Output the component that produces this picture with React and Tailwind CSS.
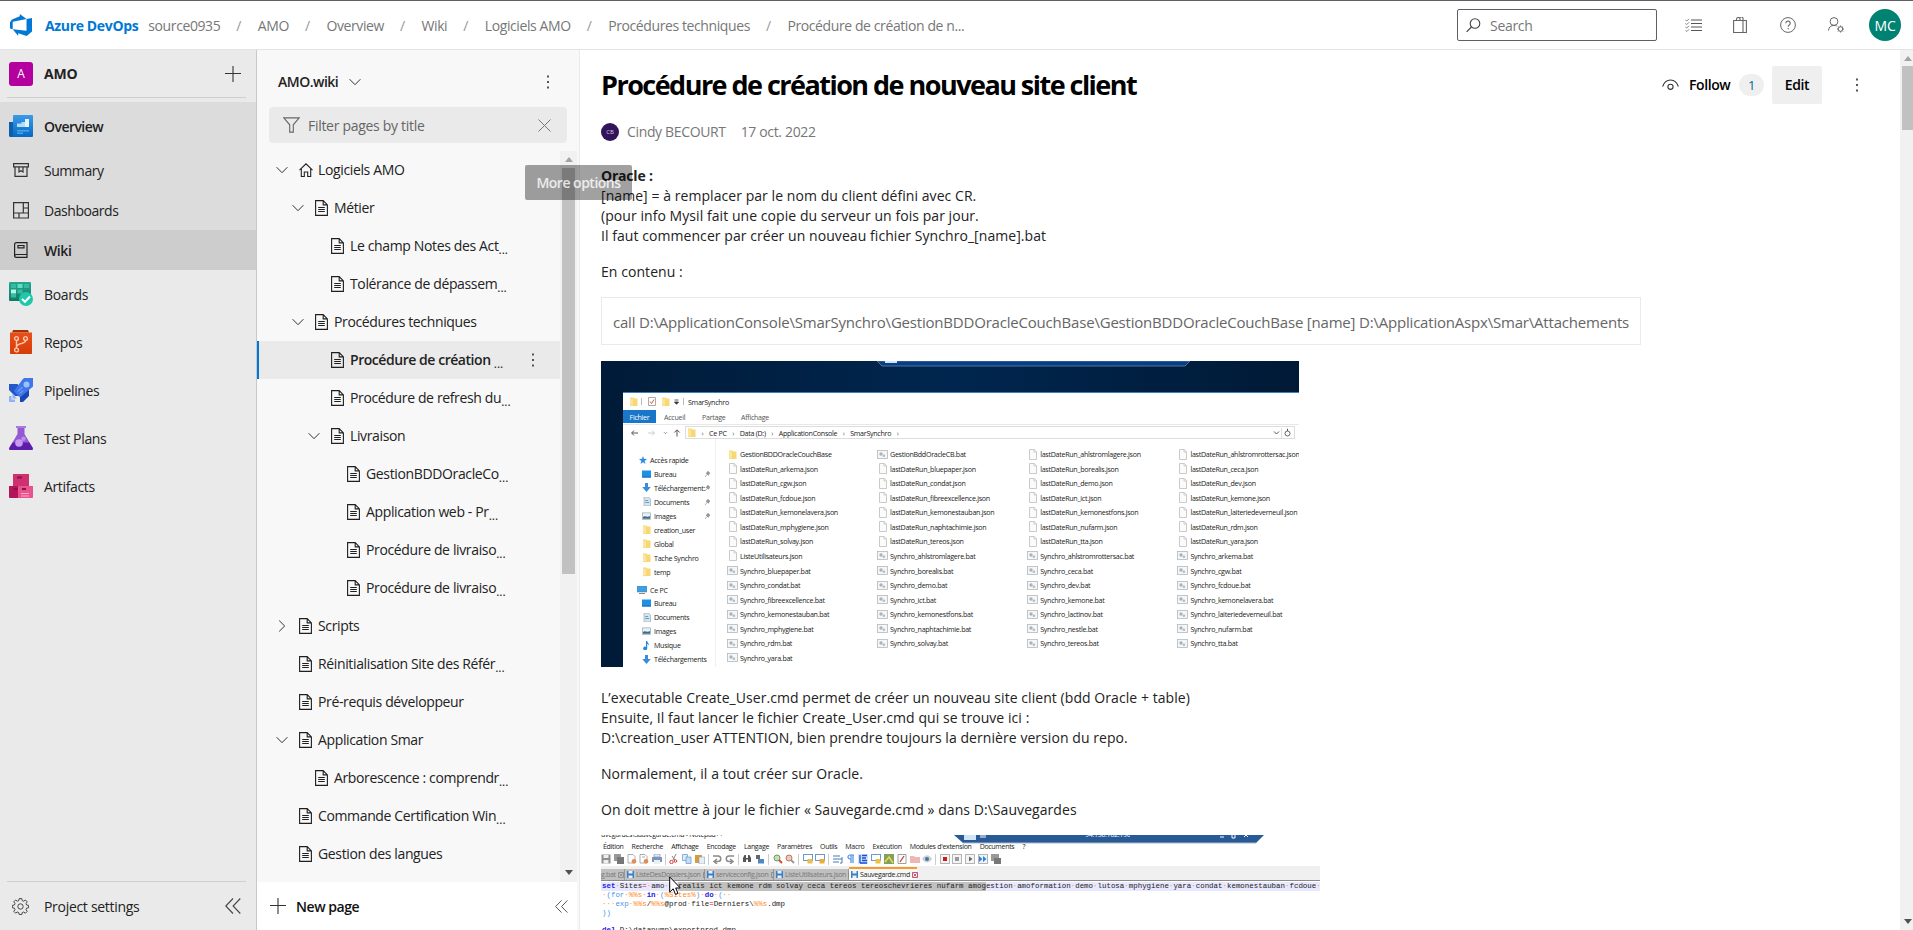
import React from "react";

/* ---------- icons ---------- */
const Svg = ({ w, h = w, vb, className = "", children, ...p }) => (
  <svg width={w} height={h} viewBox={vb || `0 0 ${w} ${h}`} fill="none" className={`shrink-0 ${className}`} {...p}>
    {children}
  </svg>
);
const Logo = () => (
  <Svg w={22} vb="0 0 24 24">
    <path fill="#0078d4" d="M0 8.877L2.247 5.91l8.405-3.416V.022l7.37 5.393L2.966 8.338v8.225L0 15.707zm24-4.45v14.651l-5.753 4.9-9.303-3.057v3.056l-5.978-7.416 15.057 1.798V5.415z" />
  </Svg>
);
const Plus = ({ color = "#333" }) => (
  <Svg w={16}><path d="M8 0v16M0 7.5h16" stroke={color} strokeWidth="1.1" /></Svg>
);
const ChevDown = () => (
  <Svg w={12}><path d="M.6 3.2L6 8.7l5.4-5.5" stroke="#333" strokeWidth="1" /></Svg>
);
const ChevRight = () => (
  <Svg w={12}><path d="M3.2.6L8.7 6l-5.5 5.4" stroke="#333" strokeWidth="1" /></Svg>
);
const Dots = () => (
  <Svg w={4} h={16}>
    <rect x="1" y="1.5" width="2" height="2" fill="#555" /><rect x="1" y="7" width="2" height="2" fill="#555" /><rect x="1" y="12.5" width="2" height="2" fill="#555" />
  </Svg>
);
const Page = () => (
  <Svg w={13} h={16}>
    <path d="M.6.6h7.6l4.2 4.3v10.5H.6zM8.2.6v4.3h4.2M3.2 7.5h6.6M3.2 9.5h6.6M3.2 11.5h6.6" stroke="#1f1f1f" strokeWidth="1.1" />
  </Svg>
);
const Home = () => (
  <Svg w={14} h={14}><path d="M.5 7.2L7 .8l6.500 6.400M2.300 5.700v7.800h3V9h3.400v4.500h3V5.700" stroke="#222" strokeWidth="1.100" /></Svg>
);
const DoubleLeft = ({ s = 16 }) => (
  <Svg w={s} vb="0 0 16 16"><path d="M8 .5L.8 8 8 15.500M15.300.5L8.100 8l7.200 7.500" stroke="#444" strokeWidth="1.100" /></Svg>
);
const Folder = ({ s = 9 }) => (
  <Svg w={s} vb="0 0 9 9"><path d="M1 .5h3.500l.8 1H8.500V9H1z" fill="#f8d775" /><path d="M1 1.500h3v7H1z" fill="#fbe49b" /></Svg>
);
const FileIcon = () => (
  <Svg w={8} h={11}><path d="M.5.5h4.800L7.500 2.800v7.700h-7z" fill="#fbfbfb" stroke="#bdbdbd" strokeWidth=".8" /><path d="M5 .5v2.500h2.500" stroke="#bdbdbd" strokeWidth=".7" /></Svg>
);
const BatIcon = () => (
  <Svg w={11} h={9}><rect x=".5" y=".5" width="10" height="8" fill="#f4f6f7" stroke="#b4b9bd" strokeWidth=".8" /><circle cx="4" cy="4" r="1.700" fill="#a9b3ba" /><circle cx="6.900" cy="5.800" r="1.300" fill="#b3bcc2" /></Svg>
);

const OverviewIcon = () => (
  <Svg w={24}>
    <path d="M0 8h5v15H1.500A1.500 1.500 0 010 21.500z" fill="#0f5ea8" />
    <rect x="4" y="1" width="20" height="22" rx="1" fill="url(#ov)" />
    <path d="M8 13V9.500h4.500V8H16V5h4v8z" fill="#b5dcf8" /><path d="M16 5h4v8h-4z" fill="#e4f3fd" />
    <path d="M8 16h12v1.500H8zM8 18.500h6V20H8z" fill="#4da3e8" />
    <defs><linearGradient id="ov" x1="0" y1="0" x2="0" y2="1"><stop stopColor="#3c9be8" /><stop offset="1" stopColor="#0669c4" /></linearGradient></defs>
  </Svg>
);
const SummaryIcon = () => (
  <Svg w={16}><path d="M.6 1.600h14.800v3.300H.6zM2 5v9.400h12V5M6 5v5l2-1.300L10 10V5" stroke="#333" strokeWidth="1.200" /></Svg>
);
const DashIcon = () => (
  <Svg w={16} h={17}><path d="M.6.6h14.800v15.400H.6zM.6 11H15.400M10.300.6V11M10.300 6h5.100M6 11v5" stroke="#333" strokeWidth="1.200" /></Svg>
);
const WikiIcon = () => (
  <Svg w={14} h={16}><path d="M13 12.500V.6H2.500A1.900 1.900 0 00.6 2.500v11a1.900 1.900 0 001.900 1.900H13v-2.900H2.500A1.900 1.900 0 00.8 13.500M4 3.500h6v2.300H4z" stroke="#222" strokeWidth="1.200" /></Svg>
);
const BoardsIcon = () => (
  <Svg w={24}>
    <rect width="22" height="19" rx="1" fill="url(#bo)" />
    <path d="M2 2h5v4H2z M15 2h5v4h-5z M2 12h5v3.500H2z M8.500 7.500h5v4h-5z" fill="#35bba0" /><path d="M8.500 2h5v4h-5z" fill="#5fe0c6" /><path d="M2 7.500h5v4H2z" fill="#a9fbe8" />
    <circle cx="17" cy="17" r="7" fill="#1fc8ad" /><path d="M13 17l3 2.800 5-5.300" stroke="#fff" strokeWidth="2" />
    <defs><linearGradient id="bo" x1="0" y1="0" x2="0" y2="1"><stop stopColor="#28a88e" /><stop offset="1" stopColor="#0e7a66" /></linearGradient></defs>
  </Svg>
);
const ReposIcon = () => (
  <Svg w={24}>
    <path d="M4 0h15l1 2.500H3z" fill="#a53008" /><path d="M1 2.500h22V23.200a.8.8 0 01-.8.8H1.800a.8.800 0 01-.8-.8z" fill="url(#re)" />
    <g stroke="#fdc7ae" strokeWidth="1.400"><circle cx="7.500" cy="8.500" r="1.900" /><circle cx="16.500" cy="8.500" r="1.900" /><circle cx="7.500" cy="20" r="1.900" /><path d="M7.500 10.500V18M16.500 10.500c0 4-8.500 2-9 6.500" /></g>
    <defs><linearGradient id="re" x1="0" y1="0" x2="0" y2="1"><stop stopColor="#e8501a" /><stop offset="1" stopColor="#d63c07" /></linearGradient></defs>
  </Svg>
);
const PipesIcon = () => (
  <Svg w={24}>
    <path d="M0 6h8.500L16 14v7l-5 3V18H6L0 12z" fill="#2159c9" /><path d="M14 12l6-2v8l-6 6h-3v-7z" fill="#1747b5" />
    <path d="M13.500 1.500L15 0h9v8.500L11 19.500 5 13z" fill="#3f76ea" /><circle cx="17.500" cy="6.500" r="3" fill="#9cc0fa" />
    <path d="M9 13.500l4.500-4.500M11 15.500l3-3" stroke="#9cc0fa" strokeWidth=".9" /><path d="M0 18h2.500v3.500H6V24H0zM3.500 16l4.500 4.500H3.500z" fill="#8db2f7" />
  </Svg>
);
const TestIcon = () => (
  <Svg w={24}>
    <path d="M7 0h10v2h-1.500v6L23.500 21.500C24.300 23 23.800 24 22.500 24h-21C.2 24-.3 23 .5 21.500L8.500 8V2H7z" fill="#9259d1" /><path d="M3.700 16.500h16.600l3.200 5c.8 1.500.3 2.500-1 2.500h-21C.2 24-.3 23 .5 21.500z" fill="#5c1ea8" />
    <path d="M7 0h10v2H7z" fill="#a979dd" /><circle cx="10" cy="17" r="3.800" fill="#c79cf0" /><circle cx="14.500" cy="12.800" r="2.300" fill="#bc8fe8" />
  </Svg>
);
const ArtIcon = () => (
  <Svg w={24}>
    <path d="M4 0h16v12H4z" fill="#cf3070" /><path d="M8 2.500h5v2H8z" fill="#8f1045" /><path d="M0 12h12v12H.8a.8.800 0 01-.8-.8z" fill="#b3175b" /><path d="M9 12h15v11.200a.8.800 0 01-.8.800H9z" fill="#e8528d" /><path d="M4.500 14h4v2h-4zM13 14h4v2h-4z" fill="#8f1045" /><path d="M12 19h8v1h-8zM12 21.500h8v1h-8z" fill="#f9a8ca" />
  </Svg>
);
const Gear = () => (
  <Svg w={17}>
    <circle cx="8.500" cy="8.500" r="2.700" stroke="#444" />
    <path d="M7.200.6h2.600l.4 2 1.500.6L13.400 2l1.800 1.800-1.200 1.700.6 1.500 2 .4v2.400l-2 .4-.6 1.500 1.200 1.700-1.800 1.800-1.700-1.200-1.500.6-.4 2H7.200l-.4-2-1.500-.6-1.700 1.200L1.800 13.400 3 11.700l-.6-1.500-2-.4V7.400l2-.4L3 5.500 1.800 3.800 3.600 2l1.700 1.200 1.500-.6z" stroke="#444" />
  </Svg>
);
const Eye = () => (
  <Svg w={17} h={12}><path d="M.6 7.500C2 3.500 5 1 8.500 1s6.500 2.500 7.900 6.500" stroke="#333" strokeWidth="1.100" /><circle cx="8.500" cy="7.800" r="2.600" stroke="#333" strokeWidth="1.100" /></Svg>
);

/* ---------- header ---------- */
const crumbs = ["AMO", "Overview", "Wiki", "Logiciels AMO", "Procédures techniques", "Procédure de création de n..."];
function Header() {
  return (
    <header className="flex h-[50px] shrink-0 items-center border-t border-b border-t-[#605f66] border-b-[#e4e4e4] bg-white pl-[10px]">
      <Logo />
      <span className="ml-[13px] text-[14px] font-bold tracking-[-0.35px] text-[#0078d4]">Azure DevOps</span>
      <span className="ml-[10px] pt-[1px] text-[14px] tracking-[-0.4px] text-[#777]">source0935</span>
      {crumbs.map((c) => (
        <React.Fragment key={c}>
          <span className="ml-[16px] w-[6px] pt-[1px] text-[14px] text-[#999]">/</span>
          <span className="ml-[15.500px] pt-[1px] text-[14px] tracking-[-0.4px] text-[#777]">{c}</span>
        </React.Fragment>
      ))}
      <div className="flex-1" />
      <div className="flex h-8 w-[200px] shrink-0 items-center rounded-[2px] border border-[#605f66] pl-[8px]">
        <Svg w={15}><circle cx="9" cy="5.500" r="4.800" stroke="#444" strokeWidth="1.100" /><path d="M5.500 9L.6 13.900" stroke="#444" strokeWidth="1.200" /></Svg>
        <span className="ml-[9px] pt-[1px] text-[14px] tracking-[-0.3px] text-[#777]">Search</span>
      </div>
      <div className="ml-[28px] flex w-[228px] shrink-0 items-center">
        <Svg w={17} h={14}>
          <path d="M6 2h11M6 5.500h11M6 9h11M6 12.500h11" stroke="#555" />
          <path d="M.5 2l1.300 1L4 .8M.5 5.500l1.300 1L4 4.300M.5 9l1.300 1L4 7.800M.5 12.500l1.300 1L4 11.300" stroke="#666" strokeWidth=".8" />
        </Svg>
        <Svg w={14} h={16} className="ml-[31px]"><path d="M.6 3.500h12.800v12H.6zM10 3.500v12M3.500 3.500V2.300a1.800 1.800 0 013.600 0v1.200M6.500 1.200A1.800 1.800 0 0110 2.300v1.200" stroke="#666" strokeWidth="1.100" /></Svg>
        <Svg w={16} className="ml-[33px]"><circle cx="8" cy="8" r="7.400" stroke="#666" /><path d="M5.800 6.200a2.200 2.200 0 114 1.300c-.8.700-1.600 1-1.600 2.300M8.200 11v1.300" stroke="#666" strokeWidth="1.100" /></Svg>
        <Svg w={17} h={16} className="ml-[32px]"><circle cx="6" cy="4.500" r="3.900" stroke="#666" /><path d="M.5 13.500C.8 10 3 8.400 6 8.400c1 0 2 .2 2.700.7" stroke="#666" /><circle cx="12.500" cy="12" r="2.300" stroke="#666" /><path d="M12.500 8.500v1.200M12.500 14.300v1.200M9 12h1.200M14.800 12H16M10 9.500l.9.900M14.100 13.600l.9.900M15 9.500l-.9.900M10.900 13.600l-.9.900" stroke="#666" /></Svg>
        <div className="ml-[24px] flex h-8 w-8 shrink-0 items-center justify-center rounded-full bg-[#008272] text-[14px] tracking-[-0.3px] text-white">MC</div>
      </div>
    </header>
  );
}

/* ---------- project navigation ---------- */
function NavItem({ icon, label, h = "h-12", extra = "tracking-[-0.35px]" }) {
  return (
    <div className={`flex items-center ${h} ${extra}`}>
      <div className="ml-[9px] flex w-[24px] items-center justify-center">{icon}</div>
      <span className="ml-[11px] text-[14px]">{label}</span>
    </div>
  );
}
function Sidebar() {
  return (
    <nav className="flex w-[257px] shrink-0 flex-col border-r border-[#c8c8c8] bg-[#eaeaea] text-[#222]">
      <div className="mr-[10px] ml-[7px] flex h-[48px] items-center border-b border-[#cfcfcf] pl-[2px]">
        <div className="flex h-[24px] w-[24px] items-center justify-center rounded-[3px] bg-[#b4009e] text-[12px] text-white">A</div>
        <span className="ml-[11px] text-[14px] font-bold tracking-[-0.2px]">AMO</span>
        <div className="mr-[5px] ml-auto"><Plus /></div>
      </div>
      <div className="mt-[4px] bg-[#dcdcdc]">
        <NavItem icon={<OverviewIcon />} label="Overview" extra="font-semibold tracking-[-0.55px]" />
        <NavItem icon={<SummaryIcon />} label="Summary" h="h-10" extra="tracking-[-0.45px]" />
        <NavItem icon={<DashIcon />} label="Dashboards" h="h-10" extra="tracking-[-0.45px]" />
        <NavItem icon={<WikiIcon />} label="Wiki" h="h-10" extra="bg-[#cdcdcd] font-semibold tracking-[-0.4px]" />
      </div>
      <NavItem icon={<BoardsIcon />} label="Boards" />
      <NavItem icon={<ReposIcon />} label="Repos" />
      <NavItem icon={<PipesIcon />} label="Pipelines" />
      <NavItem icon={<TestIcon />} label="Test Plans" />
      <NavItem icon={<ArtIcon />} label="Artifacts" />
      <div className="mt-auto mr-[10px] ml-[7px] flex h-[49px] items-center border-t border-[#cfcfcf] pl-[5px]">
        <Gear />
        <span className="ml-[15px] text-[14px] tracking-[-0.3px]">Project settings</span>
        <div className="mr-[5px] ml-auto"><DoubleLeft /></div>
      </div>
    </nav>
  );
}

/* ---------- wiki tree ---------- */
const tree = [
  [0, "Logiciels AMO", "home"], [1, "Métier", "open"], [2, "Le champ Notes des Act", "", 1], [2, "Tolérance de dépassem", "", 1],
  [1, "Procédures techniques", "open"], [2, "Procédure de création ", "sel", 1], [2, "Procédure de refresh du", "", 1], [2, "Livraison", "open"],
  [3, "GestionBDDOracleCo", "", 1], [3, "Application web - Pr", "", 1], [3, "Procédure de livraiso", "", 1], [3, "Procédure de livraiso", "", 1],
  [0, "Scripts", "closed"], [0, "Réinitialisation Site des Référ", "", 1], [0, "Pré-requis développeur", ""], [0, "Application Smar", "open"],
  [1, "Arborescence : comprendr", "", 1], [0, "Commande Certification Win", "", 1], [0, "Gestion des langues", ""],
];
const indent = ["pl-[19px]", "pl-[35px]", "pl-[51px]", "pl-[67px]"];
function TreeRow({ level, label, kind, more }) {
  const sel = kind === "sel";
  return (
    <div className={`relative flex h-[38px] items-center ${indent[level]} ${sel ? "bg-[#eaeaea]" : ""}`}>
      {sel && <span className="absolute inset-y-0 left-0 w-[2px] bg-[#0078d4]" />}
      <span className="w-3">{(kind === "open" || kind === "home") ? <ChevDown /> : kind === "closed" ? <ChevRight /> : null}</span>
      <span className="ml-[11px] w-[13px]">{kind === "home" ? <Home /> : <Page />}</span>
      <span className={`ml-[6px] pb-[1px] text-[14px] whitespace-pre text-[#222] ${sel ? "font-semibold tracking-[-0.45px]" : "tracking-[-0.36px]"}`}>
        {label}
        {more ? <span className="relative top-[3px] text-[12px] font-normal tracking-normal">...</span> : null}
      </span>
      {sel && <span className="mr-[25px] ml-auto"><Dots /></span>}
    </div>
  );
}
const Tri = ({ up, color }) => <Svg w={8} h={5}><path d={up ? "M0 5l4-5 4 5z" : "M0 0l4 5 4-5z"} fill={color} /></Svg>;

function WikiPane() {
  return (
    <aside className="relative flex w-[323px] shrink-0 flex-col border-r border-[#eaeaea] bg-[#f8f8f8]">
      <div className="flex h-[57px] items-center pt-[7px] pl-[21px]">
        <span className="pb-[1px] text-[14px] font-semibold tracking-[-0.5px] text-[#222]">AMO.wiki</span>
        <span className="ml-[11px]"><ChevDown /></span>
        <span className="mr-[29px] ml-auto"><Dots /></span>
      </div>
      <div className="mx-[12px] flex h-[36px] w-[298px] items-center rounded bg-[#eaeaea] pr-[16px] pl-[14px]">
        <Svg w={17} h={16}><path d="M.8.900h15.400L10.300 7.800v7.300H6.700V7.800z" stroke="#666" strokeWidth="1.100" /></Svg>
        <span className="ml-[8px] text-[14px] tracking-[-0.3px] text-[#666]">Filter pages by title</span>
        <Svg w={13} className="ml-auto"><path d="M.5.5l12 12M12.500.5l-12 12" stroke="#777" /></Svg>
      </div>
      <div className="mt-2 flex h-[731px] overflow-hidden">
        <div className="w-[303px] shrink-0">
          {tree.map((t, i) => <TreeRow key={i} level={t[0]} label={t[1]} kind={t[2]} more={t[3]} />)}
        </div>
        <div className="flex w-[17px] flex-col items-center bg-[#f1f1f1] py-[6px]">
          <Tri up color="#a3a3a3" />
          <div className="mt-[6px] h-[406px] w-[13px] bg-[#c1c1c1]" />
          <div className="mt-auto mb-[1px]"><Tri color="#505050" /></div>
        </div>
      </div>
      <div className="mr-[2px] flex flex-1 items-center bg-white pl-[13px]">
        <Plus />
        <span className="ml-[10px] text-[14px] font-semibold tracking-[-0.45px] text-[#111]">New page</span>
        <span className="mr-[9px] ml-auto"><DoubleLeft s={13} /></span>
      </div>
      <div className="absolute top-[115px] left-[268px] z-20 flex h-[35px] w-[107px] items-center justify-center rounded-[2px] bg-black/[0.37] text-[14px] font-semibold tracking-[-0.5px] text-white/80">More options</div>
    </aside>
  );
}

/* ---------- file explorer capture ---------- */
const files = [
  ["GestionBDDOracleCouchBase", "lastDateRun_arkema.json", "lastDateRun_cgw.json", "lastDateRun_fcdoue.json", "lastDateRun_kemonelavera.json", "lastDateRun_mphygiene.json", "lastDateRun_solvay.json", "ListeUtilisateurs.json", "Synchro_bluepaper.bat", "Synchro_condat.bat", "Synchro_fibreexcellence.bat", "Synchro_kemonestauban.bat", "Synchro_mphygiene.bat", "Synchro_rdm.bat", "Synchro_yara.bat"],
  ["GestionBddOracleCB.bat", "lastDateRun_bluepaper.json", "lastDateRun_condat.json", "lastDateRun_fibreexcellence.json", "lastDateRun_kemonestauban.json", "lastDateRun_naphtachimie.json", "lastDateRun_tereos.json", "Synchro_ahlstromlagere.bat", "Synchro_borealis.bat", "Synchro_demo.bat", "Synchro_ict.bat", "Synchro_kemonestfons.bat", "Synchro_naphtachimie.bat", "Synchro_solvay.bat"],
  ["lastDateRun_ahlstromlagere.json", "lastDateRun_borealis.json", "lastDateRun_demo.json", "lastDateRun_ict.json", "lastDateRun_kemonestfons.json", "lastDateRun_nufarm.json", "lastDateRun_tta.json", "Synchro_ahlstromrottersac.bat", "Synchro_ceca.bat", "Synchro_dev.bat", "Synchro_kemone.bat", "Synchro_lactinov.bat", "Synchro_nestle.bat", "Synchro_tereos.bat"],
  ["lastDateRun_ahlstromrottersac.json", "lastDateRun_ceca.json", "lastDateRun_dev.json", "lastDateRun_kemone.json", "lastDateRun_laiteriedeverneuil.json", "lastDateRun_rdm.json", "lastDateRun_yara.json", "Synchro_arkema.bat", "Synchro_cgw.bat", "Synchro_fcdoue.bat", "Synchro_kemonelavera.bat", "Synchro_laiteriedeverneuil.bat", "Synchro_nufarm.bat", "Synchro_tta.bat"],
];
const glyphs = {
  desk: <Svg w={9} h={8}><rect y=".5" width="9" height="7" fill="#1e90e6" /><path d="M0 6.500h9v1H0z" fill="#1668b8" /></Svg>,
  down: <Svg w={9}><path d="M3 0h3v4h2.800L4.500 9 .2 4H3z" fill="#3a8ddb" /></Svg>,
  doc: <Svg w={8} h={9}><path d="M1 0h4.500L7.500 2v7H1z" fill="#d8e4ec" stroke="#8da2b0" strokeWidth=".6" /><path d="M2.200 3.500h3M2.200 5.500h4" stroke="#3f8fc8" strokeWidth=".8" /></Svg>,
  img: <Svg w={9} h={8}><rect x=".4" y=".9" width="8.200" height="6.400" fill="#e8f2f8" stroke="#98a4ac" strokeWidth=".7" /><path d="M1 5c2-2 4 1 7-1v2.700H1z" fill="#3a6d86" /></Svg>,
  note: <Svg w={7} h={9}><path d="M3 0l1.200 0c0 2 2.300 2.200 1.600 4.500C5.500 3.500 4.800 3 4.200 3v4.200A2 1.700 0 113 5.800z" fill="#1f8ae0" /></Svg>,
  fold: <Folder />,
};
const quick = [["Bureau", "desk", 1], ["Téléchargement:", "down", 1], ["Documents", "doc", 1], ["Images", "img", 1], ["creation_user", "fold"], ["Global", "fold"], ["Tache Synchro", "fold"], ["temp", "fold"]];
const pc = [["Bureau", "desk"], ["Documents", "doc"], ["Images", "img"], ["Musique", "note"], ["Téléchargements", "down"]];
const SideRow = ({ r }) => (
  <div className="flex h-[13.950px] items-center">
    <span className="flex w-[28px] shrink-0 justify-end"><span className="flex w-[9px] justify-center">{glyphs[r[1]]}</span></span>
    <span className="ml-[3px] w-[51px] shrink-0 whitespace-nowrap">{r[0]}</span>
    {r[2] && <Svg w={5} h={6}><path d="M0 6l2-2.500M1 2l2.500 2.500M3 .3L5 2.300 3.300 4 1.500 2z" stroke="#888" strokeWidth=".7" fill="#999" /></Svg>}
  </div>
);
function Explorer() {
  return (
    <div className="mt-[16px] flex h-[306px] w-[698px] flex-col overflow-hidden bg-linear-to-r from-[#001b38] via-[#00264f] to-[#001a36] pl-[22px] text-[7.100px] tracking-[-0.28px] text-[#222]">
      <div className="h-[31px] shrink-0 pl-[254px]">
        <Svg w={314} h={6}><path d="M0 0h313l-5 5H5z" fill="#063f87" stroke="#6884a3" strokeWidth=".8" /><rect x="8" width="12" height="2" fill="#cfe5f7" /></Svg>
      </div>
      <div className="flex flex-1 flex-col overflow-hidden border-t border-[#3d7fbf] bg-white">
        <div className="flex h-[17px] shrink-0 items-center pl-[6px]">
          <Folder /><span className="mx-[3px] h-[7px] w-px bg-[#bbb]" />
          <Svg w={8} h={9} className="ml-[3px]"><path d="M.5.5h7v8h-7z" fill="#fff" stroke="#888" strokeWidth=".7" /><path d="M2 4.500l1.500 2L6 2.500" stroke="#d45d2a" /></Svg>
          <span className="ml-[5px]"><Folder /></span>
          <Svg w={5} h={6} className="ml-[4px]"><path d="M.5 1h4M.5 3h4L2.500 5.300z" stroke="#333" strokeWidth=".8" fill="#333" /></Svg>
          <span className="mx-[4px] h-[7px] w-px bg-[#bbb]" /><span>SmarSynchro</span>
        </div>
        <div className="flex h-[13px] shrink-0 items-center">
          <span className="flex h-full w-[33px] items-center justify-center bg-[#1976c8] text-white">Fichier</span>
          <span className="ml-[8px] w-[38px] text-[#555]">Accueil</span><span className="w-[39px] text-[#555]">Partage</span><span className="text-[#555]">Affichage</span>
        </div>
        <div className="mt-[1px] h-px shrink-0 bg-[#e8e8e8]" />
        <div className="mt-[1px] flex h-[13px] shrink-0 items-center pl-[8px]">
          <Svg w={52} h={8}><path d="M7 4H.8M3 1.500L.6 4 3 6.500" stroke="#555" /><path d="M17 4h6.500M21 1.500L23.500 4 21 6.500" stroke="#ccc" /><path d="M33 3.200l1.500 1.500L36 3.200" stroke="#777" strokeWidth=".8" /><path d="M46 7.500V1M43.300 3.500L46 .8l2.700 2.700" stroke="#555" /></Svg>
          <div className="ml-[2px] flex h-full w-[610px] items-center border border-[#ddd] pl-[1px]">
            <Folder />
            {["Ce PC", "Data (D:)", "ApplicationConsole", "SmarSynchro", ""].map((s, i) => (
              <React.Fragment key={i}><span className="w-[13px] text-center text-[#555]">›</span><span>{s}</span></React.Fragment>
            ))}
            <Svg w={20} h={10} className="mr-[1px] ml-auto"><path d="M1 3.500L3.500 6 6 3.500" stroke="#555" /><path d="M8.500 0v10" stroke="#ddd" /><circle cx="14.500" cy="5.500" r="2.500" stroke="#555" strokeWidth=".9" /><path d="M14.500 3V.8" stroke="#555" /></Svg>
          </div>
        </div>
        <div className="flex flex-1">
          <div className="w-[93px] shrink-0 border-r border-[#f0f0f0] pt-[13px]">
            <div className="mt-px flex h-[14px] items-center pl-[16px]">
              <Svg w={8} h={8}><path d="M4 0l1 2.800 3 .2-2.300 1.900L6.500 8 4 6.300 1.500 8l.8-3.100L0 3l3-.2z" fill="#2f8ee0" /></Svg><span className="ml-[3px]">Accès rapide</span>
            </div>
            {quick.map((r) => <SideRow key={r[0]} r={r} />)}
            <div className="mt-[4px] flex h-[14px] items-center pl-[14px]">
              <Svg w={10} h={8}><rect width="10" height="6" fill="#3aa0e8" stroke="#777" strokeWidth=".5" /><path d="M2 7.500h6" stroke="#888" /></Svg><span className="ml-[3px]">Ce PC</span>
            </div>
            {pc.map((r) => <SideRow key={r[0]} r={r} />)}
          </div>
          {files.map((col, c) => (
            <div key={c} className={`shrink-0 pt-[8px] ${c === 0 ? "ml-[11px] w-[150px]" : "w-[150.200px]"}`}>
              {col.map((f) => (
                <div key={f} className="flex h-[14.540px] items-center">
                  <span className="flex w-[11px] justify-center">{!f.includes(".") ? <Folder /> : f.endsWith("json") ? <FileIcon /> : <BatIcon />}</span>
                  <span className="ml-[2px] whitespace-nowrap">{f}</span>
                </div>
              ))}
            </div>
          ))}
        </div>
      </div>
    </div>
  );
}

/* ---------- text editor capture ---------- */
const S = (el) => <Svg w={10} h={10}>{el}</Svg>;
const save = <><path d="M.5.500h9v9h-9z" fill="#8f8f8f" /><path d="M2.500 1h5v3h-5zM2.500 6h5v3.500h-5z" fill="#eee" /></>;
const sheet = (c, d) => <><path d="M1 .5h5l2 2v6.500H1z" fill="#fff" stroke="#999" strokeWidth=".8" />{c && <circle cx="7" cy="7.300" r="2.300" fill={c} />}{d}</>;
const copy = <><path d="M.5.500h5v6h-5z" fill="#dcebfa" stroke="#6fa0d2" strokeWidth=".8" /><path d="M4 3h5v6.500H4z" fill="#c5dcf5" stroke="#6fa0d2" strokeWidth=".8" /></>;
const win = (c) => <><rect x=".5" y=".5" width="9" height="6" fill="#fff" stroke="#6a9ad0" /><rect x="4.500" y="5" width="5" height="4.500" fill={c} /></>;
const box = (c) => <><rect x=".5" y=".5" width="9" height="9" fill="#f4f4f4" stroke="#b5b5b5" /><rect x="3" y="3" width="4" height="4" fill={c} /></>;
const tools = [
  save, <><path d="M0 0h7v7H0z" fill="#999" /><path d="M3 3h7v7H3z" fill="#777" /></>, sheet("#e8894d"), sheet("#e8894d", <path d="M3 3h3" stroke="#aaa" />),
  <><path d="M2 0h6v3H2z" fill="#dde8f5" stroke="#88a" strokeWidth=".6" /><path d="M0 3h10v5H0z" fill="#7f95b5" /><path d="M2 6h6v4H2z" fill="#e9eff8" /></>, "|",
  <><path d="M7 0L4 6M3 2l3 4" stroke="#888" /><circle cx="2.500" cy="8" r="1.700" stroke="#d33c3c" /><circle cx="6.500" cy="7" r="1.300" stroke="#d33c3c" /></>, copy,
  <><path d="M0 1h7v8H0z" fill="#d99a3d" /><path d="M4 3h5.500v7H4z" fill="#e6eef8" stroke="#8aa5c5" strokeWidth=".6" /></>, "|",
  <path d="M1 2h5a2.500 2.500 0 010 5.500H2M5 5L2 7.500 5 10" stroke="#8a8a8a" strokeWidth="1.500" />, <path d="M9 2H4a2.500 2.500 0 000 5.500h4M5 5l3 2.500L5 10" stroke="#8a8a8a" strokeWidth="1.500" />, "|",
  <path d="M1 8V4l1.500-3h1.500v3h2V1h1.500L9 4v4H6V5.500H4V8z" fill="#555" />, <><path d="M1 1h4v4H1z" fill="#666" /><path d="M3 5h6v4.500H3z" fill="#4f86c6" /></>, "|",
  <><circle cx="4" cy="4" r="3" fill="#bfe0b8" stroke="#6d9c66" /><path d="M6 6l3 3" stroke="#e0462f" strokeWidth="2" /></>, <><circle cx="4" cy="4" r="3" fill="#f0c7be" stroke="#c07364" /><path d="M6 6l3 3" stroke="#999" strokeWidth="2" /></>, "|",
  win("#e8c04f"), win("#f0a73c"), "|",
  <path d="M0 2h7M0 5h9M0 8h6M9 3v6H7" stroke="#4a78b5" />, <path d="M5 9V1M7 9V1M8 1H4a2 2 0 000 4h1" stroke="#4a90e0" strokeWidth="1.200" />,
  <><rect width="10" height="10" fill="#cfe2fb" /><path d="M2 1v8M4 1.500h5M4 4h4M4 6.500h5M2 9h7" stroke="#1c4fd0" strokeWidth="1.300" /></>, win("#f0c23c"),
  <><rect width="10" height="10" fill="#7fa35a" /><path d="M1 8l4-5 4 6" stroke="#f1d25b" strokeWidth="1.500" /></>, <><path d="M1 .5h8v9H1z" fill="#fff" stroke="#888" strokeWidth=".8" /><path d="M3 8l4-6" stroke="#c83b3b" strokeWidth="1.300" /></>,
  <path d="M0 2h4l1 1h5v6H0z" fill="#efb6b6" />, <><path d="M0 5c3-5 7-5 10 0-3 4.500-7 4.500-10 0z" fill="#c9d2da" /><circle cx="5" cy="5" r="2" fill="#4e7590" /></>, "|",
  box("#c81e1e"), box("#999"), <><rect x=".5" y=".5" width="9" height="9" fill="#f4f4f4" stroke="#b5b5b5" /><path d="M4 2.500L7.500 5 4 7.500z" fill="#666" /></>, <><rect x=".5" y=".5" width="9" height="9" fill="#eaf2fc" stroke="#b5b5b5" /><path d="M1 2l3.500 3L1 8zM5 2l3.500 3L5 8z" fill="#3c7fd6" /></>,
  <><path d="M0 0h8v7H0z" fill="#999" /><path d="M3 4h7v6H3z" fill="#777" /></>,
];
const tabs = [["g.bat", "w-[24px]"], ["ListeDesDossiers.json", "w-[80px]"], ["serviceconfig.json", "w-[69px]"], ["ListeUtilisateurs.json", "w-[75px]"], ["Sauvegarde.cmd", "w-[68px]"]];
const B = ({ children }) => <b className="text-[#2222e8]">{children}</b>;
const O = ({ children }) => <span className="text-[#ff8a1c]">{children}</span>;
const L = ({ children }) => <span className="text-[#4c93e6]">{children}</span>;
function Editor() {
  return (
    <div className="mt-[15px] h-[95px] w-[719px] overflow-hidden bg-white text-[7px] tracking-[-0.3px] text-[#222]">
      <div className="h-[6px] overflow-hidden">
        <div className="-mt-[5px] h-[6px] leading-[10px] whitespace-nowrap">uvegardes\Sauvegarde.cmd - Notepad++</div>
      </div>
      <div className="relative flex h-[11px] items-center gap-[8px] pl-[2px] whitespace-nowrap">
        {["Édition", "Recherche", "Affichage", "Encodage", "Langage", "Paramètres", "Outils", "Macro", "Exécution", "Modules d'extension", "Documents", "?"].map((m) => <span key={m}>{m}</span>)}
        <div className="absolute -top-[6px] left-[353px] h-[9px] w-[310px]">
          <Svg w={310} h={9}><path d="M0 0h310l-8 8H9z" fill="#285a97" /><path d="M9 8h293" stroke="#aab9ca" /><rect x="10" width="12" height="5" fill="#cfe5f7" /><path d="M27 0v3M29 0v3M31 0v3M266 2h4M278 0v3h3V0M290 2l2-2 2 2" stroke="#fff" /></Svg>
        </div>
        <div className="absolute -top-[6px] left-[484px] h-[4px] overflow-hidden text-white"><div className="-mt-[5px] leading-[9px]">94.136.162.196</div></div>
      </div>
      <div className="flex h-[14px] items-center">
        {tools.map((t, i) => t === "|" ? <span key={i} className="h-[11px] w-[4.500px] border-l border-[#ccc]" /> : <span key={i} className="flex w-[12.800px] items-center">{S(t)}</span>)}
      </div>
      <div className="flex h-[15px] items-end border-b border-[#8a8a8a] bg-[#f0f0f0]">
        {tabs.map(([t, w], i) => (
          <div key={t} className={`flex shrink-0 items-center gap-[2px] whitespace-nowrap ${w} ${i === 0 ? "pr-[2px]" : "px-[2px]"} ${i === 4 ? "h-[13px] border-t-2 border-[#f79a2e] bg-[#f7f7f7]" : "h-[11px] border-r border-[#999] bg-[#c0c0c0] text-[#777]"}`}>
            {i > 0 && <Svg w={7} h={7}><path d="M0 0h7v7H0z" fill="#3d7fc6" /><path d="M1.500 0h4v2.500h-4zM1.500 4.500h4V7h-4z" fill="#e8f0fa" /></Svg>}
            <span>{t}</span>
            <Svg w={6} h={6} className="ml-auto"><path d="M.5.500h5v5h-5zM1.500 1.500l3 3M4.500 1.500l-3 3" stroke={i === 4 ? "#b8314f" : "#888"} strokeWidth=".8" /></Svg>
          </div>
        ))}
      </div>
      <div className="font-['Liberation_Mono',monospace] text-[7.440px] leading-[9px] tracking-normal whitespace-pre text-[#222]">
        <div className="mt-[1px] h-[9px] bg-[#e8e8ff] pl-[1px]">
          <B>set</B><O>·</O>Sites<span className="text-red-600">=</span><O>·</O>amo<O>·</O>bo<span className="inline-block h-[9px] bg-[#c0c0c0] align-top">realis ict kemone rdm solvay ceca tereos tereoschevrieres nufarm amog</span>estion<O>·</O>amoformation<O>·</O>demo<O>·</O>lutosa<O>·</O>mphygiene<O>·</O>yara<O>·</O>condat<O>·</O>kemonestauban<O>·</O>fcdoue<O>·</O>
        </div>
        <div className="h-[9px] pl-[1px]"><O>·</O><L>(for</L><O>·%%s·</O><B>in</B><O>·</O><L>(</L><O>%Sites%</O><L>)</L><O>·</O><B>do</B><O>·</O><L>(</L><O>··</O></div>
        <div className="h-[9px] pl-[1px]"><O>···</O><L>exp</L><O>·%%s</O>/<O>%%s</O>@prod<O>·</O>file<span className="text-red-600">=</span>Derniers\<O>%%s</O>.dmp</div>
        <div className="h-[9px] pl-[1px]"><L>))</L></div>
        <div className="mt-[8px] h-[9px] pl-[1px]"><B>del</B> D:\datapump\exportprod.dmp</div>
      </div>
    </div>
  );
}

/* ---------- article ---------- */
function Article() {
  return (
    <main className="flex min-w-0 flex-1 overflow-hidden bg-white">
      <div className="relative flex-1 pl-[21px] text-[14px] leading-5 tracking-[0.06px] text-[#222]">
        <div className="flex h-[70px] items-center">
          <h1 className="text-[27px] font-bold tracking-[-1.53px] whitespace-nowrap text-black">Procédure de création de nouveau site client</h1>
          <div className="mr-[41px] ml-auto flex items-center text-[14px] font-semibold tracking-[-0.4px] text-black">
            <Eye /><span className="ml-[10px] w-[41px] whitespace-nowrap">Follow</span>
            <span className="ml-[9px] flex h-[22px] w-[25px] items-center justify-center rounded-full bg-[#efefef] text-[13px] font-normal text-[#006c8f]">1</span>
            <span className="ml-[8px] flex h-[38px] w-[50px] items-center justify-center rounded-[2px] bg-[#efefef]">Edit</span>
            <span className="ml-[33px]"><Dots /></span>
          </div>
        </div>
        <div className="mt-[2px] flex h-[20px] items-center tracking-[-0.35px] text-[#777]">
          <span className="flex h-[18px] w-[18px] items-center justify-center rounded-full bg-[#32145a] text-[6px] tracking-normal text-[#d5c5e8]">CB</span>
          <span className="ml-[8px]">Cindy BECOURT</span><span className="ml-[15px]">17 oct. 2022</span>
        </div>
        <p className="mt-[24px]"><b className="tracking-[-0.2px]">Oracle :</b><br />[name] = à remplacer par le nom du client défini avec CR.<br />(pour info Mysil fait une copie du serveur un fois par jour.<br />Il faut commencer par créer un nouveau fichier Synchro_[name].bat</p>
        <p className="mt-[16px]">En contenu :</p>
        <pre className="mt-[15px] flex h-[48px] w-[1040px] items-center border border-[#eaeaea] pt-[2px] pl-[11px] font-['Open_Sans',sans-serif] text-[15px] tracking-[-0.2px] text-[#666]">call D:\ApplicationConsole\SmarSynchro\GestionBDDOracleCouchBase\GestionBDDOracleCouchBase [name] D:\ApplicationAspx\Smar\Attachements</pre>
        <Explorer />
        <p className="mt-[21px]">L’executable Create_User.cmd permet de créer un nouveau site client (bdd Oracle + table)<br />Ensuite, Il faut lancer le fichier Create_User.cmd qui se trouve ici :<br />D:\creation_user ATTENTION, bien prendre toujours la dernière version du repo.</p>
        <p className="mt-[16px]">Normalement, il a tout créer sur Oracle.</p>
        <p className="mt-[16px]">On doit mettre à jour le fichier « Sauvegarde.cmd » dans D:\Sauvegardes</p>
        <Editor />
        <Svg w={13} h={20} className="absolute top-[826px] left-[89px]"><path d="M.7.900v15.200l3.500-3.300 2.300 5.600 2.500-1-2.300-5.400h4.600z" fill="#fff" stroke="#000" /></Svg>
      </div>
      <div className="flex w-[13px] shrink-0 flex-col overflow-hidden bg-[#f1f1f1] pt-[6px] pb-[6px] pl-[2px]">
        <div className="pl-[2px]"><Tri up color="#a3a3a3" /></div>
        <div className="mt-[5px] h-[64px] w-[13px] bg-[#c1c1c1]" />
        <div className="mt-auto pl-[2px]"><Tri color="#505050" /></div>
      </div>
    </main>
  );
}

export default function App() {
  return (
    <div className="flex h-[930px] w-[1913px] flex-col overflow-hidden bg-white font-['Open_Sans','Noto_Sans',sans-serif]">
      <Header />
      <div className="flex h-[880px]">
        <Sidebar />
        <WikiPane />
        <Article />
      </div>
    </div>
  );
}
